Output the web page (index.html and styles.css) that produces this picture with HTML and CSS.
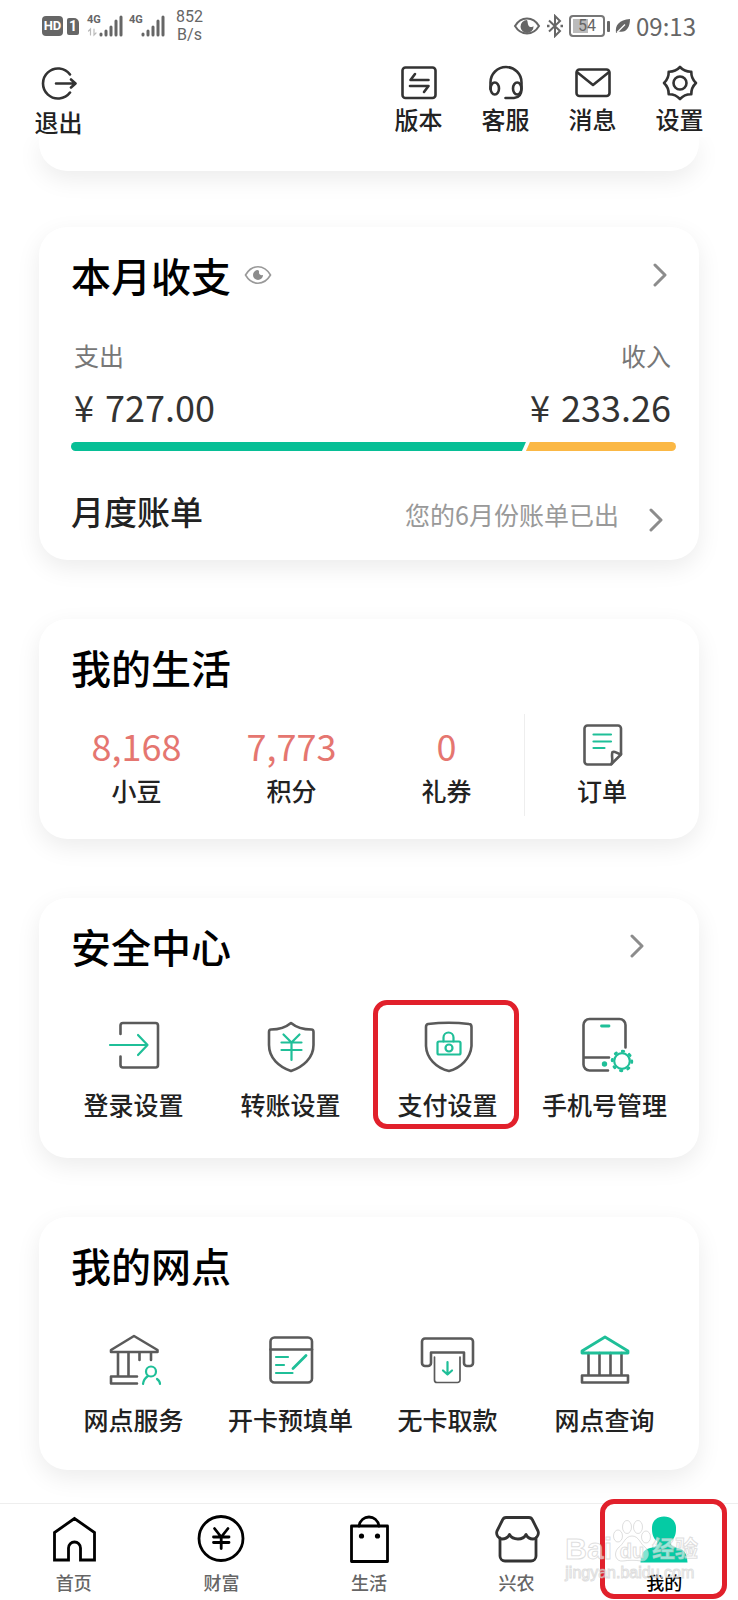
FILE: index.html
```html
<!DOCTYPE html>
<html lang="zh-CN">
<head>
<meta charset="utf-8">
<meta name="viewport" content="width=device-width, initial-scale=1">
<title>我的</title>
<link rel="stylesheet" href="styles.css">
</head>
<body>
<header class="header">
  <div class="status">
    <div class="status-side">
      <span class="badge-hd">HD</span>
      <span class="badge-sim">1</span>
      <span class="signal">
        <span class="signal-type">4G</span>
        <svg width="38" height="22" viewBox="0 0 38 22" class="bars"><path d="M16 20v-1M21 20v-4M26 20v-8M31 20V6M36 20V2"/><path class="faint" d="M5.500 20v-6l-2 2M9 14v6l2-2"/></svg>
      </span>
      <span class="signal">
        <span class="signal-type">4G</span>
        <svg width="38" height="22" viewBox="0 0 38 22" class="bars"><path d="M16 20v-1M21 20v-4M26 20v-8M31 20V6M36 20V2"/></svg>
      </span>
      <span class="speed">852<br>B/s</span>
    </div>
    <div class="status-side status-right">
      <svg width="28" height="20" viewBox="0 0 28 20"><path d="M2 10C8 0 20 0 26 10C20 20 8 20 2 10Z" fill="none" stroke="#666" stroke-width="2"/><path d="M14 4a6.500 6.500 0 1 0 6.500 6c-1 1.500-4 1.500-5-.5C14.500 8 15 6 14 4Z" fill="#666"/></svg>
      <svg width="18" height="24" viewBox="0 0 18 24" fill="none" stroke="#666" stroke-width="2"><path d="M3 6.500L14 17l-5 5V2l5 5L3 17.500"/><path d="M1 12h2.500M14.500 12H17" stroke-width="2.500"/></svg>
      <span class="battery"><span class="battery-box">54</span><span class="battery-tip"></span></span>
      <svg width="16" height="18" viewBox="0 0 16 18"><path d="M1 16C0 8 4 3 15 2C15 11 11 16 4 14.500Z" fill="#666"/><path d="M2 15.500L10 7.500" stroke="#fff" stroke-width="1.300"/></svg>
      <span class="clock">09:13</span>
    </div>
  </div>
  <div class="actions">
    <button type="button" class="action action-exit">
      <svg class="icon-top" viewBox="0 0 36 36"><path d="M29 9.500A15 15 0 1 0 29 27.500M15 18.500H33M30 14.500l4.500 4L30 22.500"/></svg>
      <span>退出</span>
    </button>
    <div class="action-group">
      <button type="button" class="action">
        <svg class="icon-top" viewBox="0 0 36 36"><rect x="1.500" y="2.500" width="33" height="30.500" rx="3"/><path d="M27.500 15H9.500L14 9M9 21H27.500L23 27"/></svg>
        <span>版本</span>
      </button>
      <button type="button" class="action">
        <svg class="icon-top" viewBox="0 0 36 36"><path d="M2.500 24V17.500a15.500 15.500 0 0 1 31 0V24C33.500 29 32 32.500 26 33H17.500"/><ellipse cx="6.800" cy="23.500" rx="4.200" ry="6"/><ellipse cx="29.200" cy="23.500" rx="4.200" ry="6"/></svg>
        <span>客服</span>
      </button>
      <button type="button" class="action">
        <svg class="icon-top" viewBox="0 0 36 36"><rect x="1.500" y="4.500" width="33" height="26.500" rx="3"/><path d="M2.500 7.500L18 20L33.500 7.500"/></svg>
        <span>消息</span>
      </button>
      <button type="button" class="action">
        <svg class="icon-top" viewBox="0 0 36 36"><path d="M18 2Q22.600 6.900 29.300 6.700Q29.100 13.400 34 18Q29.100 22.600 29.300 29.300Q22.600 29.100 18 34Q13.400 29.100 6.700 29.300Q6.900 22.600 2 18Q6.900 13.400 6.700 6.700Q13.400 6.900 18 2Z"/><circle cx="18" cy="18" r="6.500"/></svg>
        <span>设置</span>
      </button>
    </div>
  </div>
</header>

<main class="main">
  <div class="card card-peek"></div>

  <section class="card card-balance">
    <div class="card-head">
      <h2 class="title">本月收支</h2>
      <button type="button" class="bare" aria-label="显示金额">
        <svg width="28" height="20" viewBox="0 0 28 20"><path d="M1.500 10C8 -1 20 -1 26.500 10C20 21 8 21 1.500 10Z" fill="none" stroke="#999" stroke-width="1.600"/><path d="M14 5a5 5 0 1 0 5 5c-2 .5-4-.5-4-2c0-1 .5-2-1-3Z" fill="#8c8c8c"/></svg>
      </button>
      <a class="more" href="#" aria-label="本月收支详情"><svg class="chevron" viewBox="0 0 14 24"><path d="M2 2L12 12L2 22"/></svg></a>
    </div>
    <dl class="flow">
      <div><dt>支出</dt><dd class="amount"><span>¥</span><span>727.00</span></dd></div>
      <div class="flow-in"><dt>收入</dt><dd class="amount"><span>¥</span><span>233.26</span></dd></div>
    </dl>
    <div class="ratio">
      <div class="ratio-out" style="width:75.2%"></div>
      <div class="ratio-in"></div>
    </div>
    <a class="bill" href="#">
      <span class="bill-name">月度账单</span>
      <span class="bill-note">您的6月份账单已出</span>
      <svg class="chevron bill-chevron" viewBox="0 0 14 24"><path d="M2 2L12 12L2 22"/></svg>
    </a>
  </section>

  <section class="card card-life">
    <div class="card-head"><h2 class="title">我的生活</h2></div>
    <div class="life">
      <a class="life-item" href="#"><span class="count">8,168</span><span class="label">小豆</span></a>
      <a class="life-item" href="#"><span class="count">7,773</span><span class="label">积分</span></a>
      <a class="life-item" href="#"><span class="count">0</span><span class="label">礼券</span></a>
      <a class="life-item life-order" href="#">
        <svg class="icon icon-order" viewBox="0 0 48 48"><path d="M33 43.500H9.500a3 3 0 0 1-3-3V7.500a3 3 0 0 1 3-3H40a3 3 0 0 1 3 3V33.500Z"/><path d="M33.500 43C35.500 39 33 35 34.500 31C37 29.500 39 33 43 33"/><path class="green" d="M15.500 13.500H33M15.500 20.500H33M15.500 27H26.500"/></svg>
        <span class="label">订单</span>
      </a>
    </div>
  </section>

  <section class="card card-safe">
    <div class="card-head">
      <h2 class="title">安全中心</h2>
      <a class="more more-inset" href="#" aria-label="安全中心详情"><svg class="chevron" viewBox="0 0 14 24"><path d="M2 2L12 12L2 22"/></svg></a>
    </div>
    <div class="services">
      <a class="service" href="#">
        <svg class="icon" viewBox="0 0 60 60"><path d="M16.500 19V10.500a2.500 2.500 0 0 1 2.500-2.500H51.500a2.500 2.500 0 0 1 2.500 2.500V50a2.500 2.500 0 0 1-2.500 2.500H19a2.500 2.500 0 0 1-2.500-2.500V41.500"/><path class="green" d="M6 30H43.500M34 20L43.500 30L34 40"/></svg>
        <span class="label">登录设置</span>
      </a>
      <a class="service" href="#">
        <svg class="icon" viewBox="0 0 60 60"><path d="M30 8C24 13 16 14.500 10 14.500Q8 14.500 8 17V30C8 43 18 52 30 56C42 52 52.500 43 52.500 30V17Q52.500 14.500 50.500 14.500C44 14.500 36 13 30 8Z"/><path class="green" d="M22.500 19.500L30.500 27.500L38.500 19.500M30.500 27.500V45M20.500 27.500H40.500M20.500 35H40.500"/></svg>
        <span class="label">转账设置</span>
      </a>
      <a class="service" href="#">
        <svg class="icon" viewBox="0 0 60 60"><path d="M10 9Q31 6.500 51 9Q53.500 9 53.500 12V31C52.500 43 43 53 31 56C18 53 8.500 43 8 31V12Q8 9.500 10 9Z"/><path class="green" d="M25.500 26.500V22.500a5 5 0 0 1 10 0V26.500"/><rect class="green" x="19.500" y="26.500" width="23" height="13" rx="1.500"/><circle class="green" cx="31" cy="33" r="3.500"/></svg>
        <span class="label">支付设置</span>
        <span class="mark mark-pay"></span>
      </a>
      <a class="service" href="#">
        <svg class="icon" viewBox="0 0 60 60"><path d="M50.500 32.500V10a6 6 0 0 0-6-6H14.500a6 6 0 0 0-6 6V49.500a6 6 0 0 0 6 6H33M8.500 42.500H34"/><path class="green speaker" d="M26.500 11H34"/><circle cx="29.500" cy="49" r="2.700" class="green-fill"/><circle class="green" cx="47" cy="46" r="7.800"/><circle class="green teeth" cx="47" cy="46" r="9.800"/></svg>
        <span class="label">手机号管理</span>
      </a>
    </div>
  </section>

  <section class="card card-branch">
    <div class="card-head"><h2 class="title">我的网点</h2></div>
    <div class="services">
      <a class="service" href="#">
        <svg class="icon" viewBox="0 0 60 60"><path d="M30 6L53.500 20V22H7V20ZM14 22V46.500M24.500 22V46.500M35.500 22V30M47 22V30M33 46.500H7V53.500H33"/><circle class="green" cx="47" cy="41.500" r="5"/><path class="green" d="M39 54C39.500 50 41 48 44 46M53 49C55 50.500 56 52 56 54"/></svg>
        <span class="label">网点服务</span>
      </a>
      <a class="service" href="#">
        <svg class="icon" viewBox="0 0 60 60"><rect x="9.500" y="7.500" width="41.500" height="45" rx="4"/><path d="M9.500 19.500H51"/><path class="green" d="M15 27H27M15 35H23M15 43H31.500"/><path class="green speaker" d="M45 25.500L32 38.500"/></svg>
        <span class="label">开卡预填单</span>
      </a>
      <a class="service" href="#">
        <svg class="icon" viewBox="0 0 60 60"><path d="M7 8.500H52a3 3 0 0 1 3 3V33a3 3 0 0 1-3 3H49a3 3 0 0 1-3-3V22.500H13V33a3 3 0 0 1-3 3H7a3 3 0 0 1-3-3V11.500a3 3 0 0 1 3-3Z"/><path stroke-width="1.700" d="M16.500 27V50a2.500 2.500 0 0 0 2.500 2.500H39.500a2.500 2.500 0 0 0 2.500-2.500V27"/><path class="green" d="M29.500 32V44.500M25 40.500L29.500 44.500L34 40.500"/></svg>
        <span class="label">无卡取款</span>
      </a>
      <a class="service" href="#">
        <svg class="icon" viewBox="0 0 60 60"><path d="M13.500 23V45M24.500 23V45M35.500 23V45M46.500 23V45M7 45.500H53V52.500H7Z"/><path class="green speaker" d="M30 7L53 21V23H7V21Z"/></svg>
        <span class="label">网点查询</span>
      </a>
    </div>
  </section>
</main>

<nav class="tabs">
  <a class="tab" href="#">
    <svg class="icon-tab" viewBox="0 0 48 48"><path stroke-linejoin="miter" d="M24.500 3.500L4.500 17.500V45H18.500V33a6 6 0 0 1 12 0V45H44.500V17.500Z"/></svg>
    <span>首页</span>
  </a>
  <a class="tab" href="#">
    <svg class="icon-tab" viewBox="0 0 48 48"><circle cx="24" cy="23.500" r="22"/><path d="M17.500 13.500L24.200 22L31 13.500M24.200 22V33.500M16.500 22H32M16.500 27.500H32"/></svg>
    <span>财富</span>
  </a>
  <a class="tab" href="#">
    <svg class="icon-tab" viewBox="0 0 48 48"><rect x="6.500" y="11" width="36" height="35.500"/><path d="M14 11C16 -1 32 -1 34 11"/><circle cx="16.500" cy="21" r="2.600" fill="#000" stroke="none"/><circle cx="32.500" cy="21" r="2.600" fill="#000" stroke="none"/></svg>
    <span>生活</span>
  </a>
  <a class="tab" href="#">
    <svg class="icon-tab icon-shop" viewBox="0 0 48 48"><path d="M13 2.500H36Q38.500 2.500 39.500 5L45 16C46.500 20 43 24 40 24C37 24 34.500 22.500 33 19.500C30 25.500 20 25.500 16.500 19.500C15 22.500 12 24 9 24C6 24 2.500 20 4 16L9.500 5Q10.500 2.500 13 2.500Z"/><path d="M7 23V41a5 5 0 0 0 5 5H38a5 5 0 0 0 5-5V23"/></svg>
    <span>兴农</span>
  </a>
  <a class="tab tab-active" href="#" aria-current="page">
    <svg class="icon-tab" viewBox="0 0 48 48"><path class="person" d="M24 1.500C32 1.500 36.500 7 36 14C36 20 34 24 31 26C30 31 33 32 38 33C44 34.500 47 38 47.500 47.500H.5C1 38 4 34.500 10 33C15 32 18 31 17 26C14 24 12 20 12 14C11.500 7 16 1.500 24 1.500Z"/></svg>
    <span>我的</span>
    <span class="mark mark-tab"></span>
  </a>
  <div class="watermark" aria-hidden="true">
    <div class="wm-brand">
      <span>Bai</span>
      <span class="wm-paw">
        <svg width="40" height="44" viewBox="0 0 40 44"><ellipse cx="6" cy="17" rx="4.500" ry="6"/><ellipse cx="15" cy="8" rx="4.500" ry="6.500"/><ellipse cx="26" cy="8" rx="4.500" ry="6.500"/><ellipse cx="34" cy="18" rx="4.500" ry="6"/><path d="M20 17C27 17 28 25 34 29C39 34 36 43 29 42C22 41 18 41 11 42C4 43 1 35 6 29C12 25 13 17 20 17Z"/></svg>
        <span class="wm-du">du</span>
      </span>
      <span class="wm-cn">经验</span>
    </div>
    <div class="wm-url">jingyan.baidu.com</div>
  </div>
</nav>
</body>
</html>
```

FILE: styles.css
```css
* {
  box-sizing: border-box;
}

body {
  margin: 0;
  min-height: 100vh;
  display: flex;
  flex-direction: column;
  background: #fff;
  color: #222;
  font-family: "Noto Sans CJK SC", "Noto Sans", sans-serif;
  overflow-x: hidden;
}

a {
  color: inherit;
  text-decoration: none;
}

button {
  margin: 0;
  padding: 0;
  border: 0;
  background: none;
  color: inherit;
  font: inherit;
}

svg {
  display: block;
  flex: none;
}

/* Header */
.header {
  position: relative;
  z-index: 1;
  background: #fff;
}

.status {
  display: flex;
  justify-content: space-between;
  height: 52px;
  padding: 0 42px;
  color: #666;
}

.status-side {
  display: flex;
  align-items: center;
  gap: 4px;
}

.status-right {
  gap: 5px;
}

.badge-hd,
.badge-sim {
  background: #666;
  color: #fff;
  font-family: Roboto, sans-serif;
  font-weight: 700;
  text-align: center;
}

.badge-hd {
  width: 21px;
  border-radius: 4px;
  font-size: 13px;
  line-height: 20px;
}

.badge-sim {
  width: 12px;
  border-radius: 2px 5px 2px 2px;
  font-size: 14px;
  line-height: 17px;
}

.signal {
  position: relative;
  margin-left: 2px;
}

.signal + .signal {
  margin-left: 0;
}

.signal-type {
  position: absolute;
  left: 2px;
  top: -1px;
  font-family: Roboto, sans-serif;
  font-size: 11px;
  font-weight: 700;
  line-height: 12px;
}

.bars {
  fill: none;
  stroke: #666;
  stroke-width: 3;
  stroke-linecap: round;
}

.bars .faint {
  stroke: #bbb;
  stroke-width: 1.2;
}

.speed {
  margin-left: 7px;
  font-family: Roboto, sans-serif;
  font-size: 16px;
  line-height: 18px;
  text-align: center;
}

.battery {
  display: flex;
  align-items: center;
  gap: 2px;
}

.battery-box {
  width: 36px;
  border: 2px solid #777;
  border-radius: 4px;
  background: linear-gradient(90deg, #bbb 54%, #fff 54%);
  box-shadow: inset 0 0 0 2px #fff;
  font-family: Roboto, sans-serif;
  font-size: 16px;
  line-height: 18px;
  text-align: center;
}

.battery-tip {
  width: 3px;
  height: 11px;
  border-radius: 1px;
  background: #666;
}

.clock {
  font-family: "Noto Sans CJK SC", sans-serif;
  font-size: 24px;
  line-height: 30px;
}

.actions {
  display: flex;
  justify-content: space-between;
  padding: 13px 15px 0;
}

.action-group {
  display: flex;
}

.action {
  display: flex;
  flex-direction: column;
  align-items: center;
  align-self: flex-start;
  gap: 3px;
  width: 87px;
  font-size: 24px;
  font-weight: 500;
  line-height: 30px;
}

.action-exit {
  gap: 6px;
}

.icon-top {
  width: 36px;
  height: 36px;
  fill: none;
  stroke: #333;
  stroke-width: 2.6;
  stroke-linecap: round;
  stroke-linejoin: round;
}

/* Cards */
.main {
  flex: 1;
  display: flex;
  flex-direction: column;
  gap: 59px;
  padding: 0 39px 33px;
}

.card {
  border-radius: 28px;
  background: #fff;
  box-shadow: 0 8px 24px rgba(0, 0, 0, 0.08);
}

.card-peek {
  margin-bottom: -3px;
  padding: 17px;
  border-radius: 0 0 28px 28px;
}

.card-balance {
  padding: 24px 32px 22px;
}

.card-head {
  display: flex;
  align-items: center;
}

.title {
  margin: 0 13px 0 0;
  color: #000;
  font-size: 40px;
  font-weight: 500;
  line-height: 48px;
}

.more {
  margin-left: auto;
}

.more-inset {
  padding-right: 39px;
}

.chevron {
  width: 14px;
  height: 24px;
  fill: none;
  stroke: #8c8c8c;
  stroke-width: 3;
  stroke-linecap: round;
  stroke-linejoin: round;
}

.flow {
  display: flex;
  justify-content: space-between;
  margin: 38px -4px 0 3px;
}

.flow-in {
  text-align: right;
}

.flow dt {
  color: #777;
  font-size: 25px;
  line-height: 36px;
}

.amount {
  display: flex;
  gap: 11px;
  margin: 9px 0 0;
  color: #333;
  font-size: 36px;
  line-height: 48px;
}

.ratio {
  display: flex;
  height: 9px;
  margin: 12px -9px 0 0;
  border-radius: 5px;
  overflow: hidden;
}

.ratio-out {
  background: #07bf96;
  clip-path: polygon(0 0, 100% 0, calc(100% - 4px) 100%, 0 100%);
}

.ratio-in {
  flex: 1;
  background: #fbb845;
  clip-path: polygon(4px 0, 100% 0, 100% 100%, 0 100%);
}

.bill {
  display: flex;
  align-items: baseline;
  margin-top: 36px;
  line-height: 48px;
}

.bill-name {
  font-size: 33px;
  font-weight: 500;
}

.bill-note {
  margin-left: auto;
  color: #999;
  font-size: 25px;
}

.bill-chevron {
  align-self: flex-end;
  margin: 0 4px 6px 30px;
}

/* Life card */
.card-life {
  padding: 24px 20px 23px;
}

.card-life .card-head {
  padding-left: 12px;
}

.life {
  display: grid;
  grid-template-columns: repeat(4, 1fr);
  margin-top: 23px;
}

.life-item {
  display: flex;
  flex-direction: column;
  align-items: center;
  gap: 5px;
  padding: 7px 0 10px;
}

.life-order {
  border-left: 1px solid #eee;
}

.count {
  color: #e57670;
  font-size: 36px;
  line-height: 48px;
}

.label {
  font-size: 25px;
  font-weight: 500;
  line-height: 32px;
  white-space: nowrap;
}

/* Service grids */
.card-safe {
  padding: 24px 16px 38px;
}

.card-branch {
  padding: 24px 16px 35px;
}

.card-safe .card-head,
.card-branch .card-head {
  padding-left: 16px;
}

.services {
  display: grid;
  grid-template-columns: repeat(4, 1fr);
  margin-top: 45px;
}

.card-branch .services {
  margin-top: 41px;
}

.service {
  position: relative;
  display: flex;
  flex-direction: column;
  align-items: center;
  gap: 13px;
}

.icon {
  width: 60px;
  height: 60px;
  fill: none;
  stroke: #5a5a5a;
  stroke-width: 2.6;
  stroke-linecap: round;
  stroke-linejoin: round;
}

.icon-order {
  width: 48px;
  height: 48px;
}

.icon .green {
  stroke: #1fbf98;
  stroke-width: 2.2;
}

.icon .speaker {
  stroke-width: 2.8;
}

.icon .teeth {
  stroke-dasharray: 1.5 6.2;
  stroke-width: 2.8;
}

.icon .green-fill {
  fill: #1fbf98;
  stroke: none;
}

.mark {
  position: absolute;
  border: 5px solid #e1202b;
  border-radius: 14px;
}

.mark-pay {
  top: -15px;
  right: 7px;
  bottom: -9px;
  left: 4px;
}

/* Bottom tabs */
.tabs {
  position: relative;
  display: grid;
  grid-template-columns: repeat(5, 1fr);
  border-top: 1px solid #eee;
  background: #fff;
}

.tab {
  position: relative;
  display: flex;
  flex-direction: column;
  align-items: center;
  gap: 7px;
  padding: 11px 0 6px;
  color: #666;
  font-size: 18px;
  font-weight: 500;
  line-height: 24px;
}

.tab-active {
  color: #000;
}

.icon-tab {
  width: 48px;
  height: 48px;
  fill: none;
  stroke: #000;
  stroke-width: 2.8;
  stroke-linecap: round;
  stroke-linejoin: round;
}

.icon-shop {
  stroke: #333;
}

.icon-tab .person {
  fill: #05cba4;
  stroke: none;
}

.mark-tab {
  top: -5px;
  right: 11px;
  bottom: 1px;
  left: 10px;
}

/* Site watermark over the last tab */
.watermark {
  position: absolute;
  right: 40px;
  bottom: 17px;
  color: rgba(255, 255, 255, 0.6);
  font-family: "Liberation Sans", "Noto Sans CJK SC", sans-serif;
  -webkit-text-stroke: 1px rgba(190, 190, 190, 0.5);
  pointer-events: none;
}

.wm-brand {
  display: flex;
  align-items: flex-end;
  font-size: 30px;
  font-weight: 700;
  line-height: 28px;
}

.wm-paw {
  position: relative;
}

.wm-paw svg {
  fill: rgba(255, 255, 255, 0.5);
  stroke: rgba(190, 190, 190, 0.5);
}

.wm-du {
  position: absolute;
  right: 0;
  bottom: 0;
  left: 0;
  font-size: 20px;
  line-height: 24px;
  text-align: center;
}

.wm-cn {
  font-size: 23px;
}

.wm-url {
  font-size: 16px;
  line-height: 20px;
}
```
